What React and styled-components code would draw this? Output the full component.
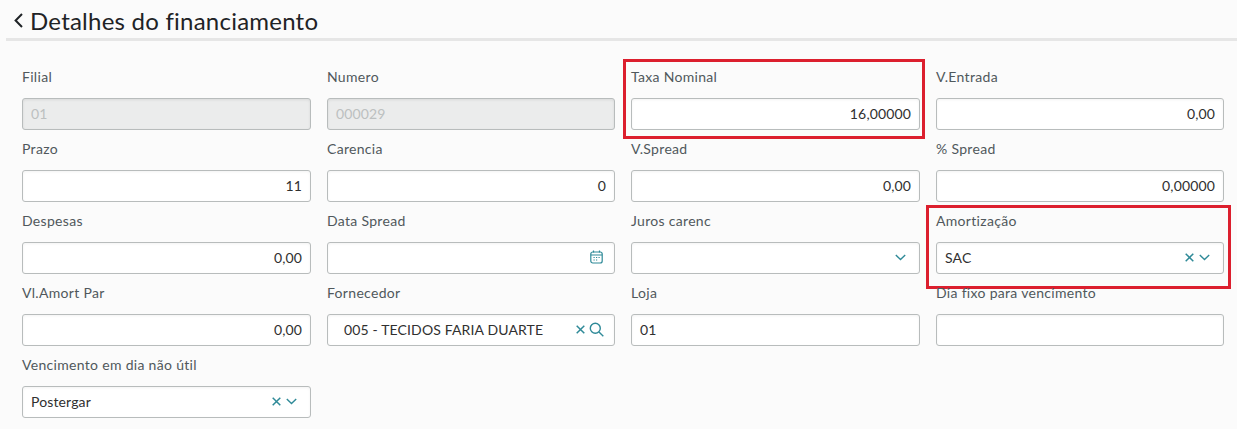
import styled, { createGlobalStyle } from "styled-components"

const GlobalStyle = createGlobalStyle`
html, body {
  margin: 0;
  padding: 0;
  background: #fbfbfb;
  font-family: "Lato", "Open Sans", sans-serif;
}
`;

const Page = styled.div`
  width: 1237px;
  height: 429px;
  overflow: hidden;
`;

const Header = styled.div`
  display: flex;
  align-items: center;
  gap: 7px;
  height: 38px;
  margin-left: 6px;
  padding-left: 8px;
  border-bottom: 3px solid #e6e6e6;
  box-sizing: content-box;
`;

const Title = styled.h1`
  margin: 3px 0 0;
  font-family: "Lato", sans-serif;
  font-size: 24px;
  font-weight: 400;
  letter-spacing: 0.23px;
  color: #1f2326;
`;

const Form = styled.div`
  display: grid;
  grid-template-columns: 289px 288px 289px 288px;
  column-gap: 16px;
  grid-auto-rows: 72px;
  padding: 26px 0 0 22px;
`;

const Field = styled.div`
  position: relative;
  display: flex;
  flex-direction: column;
  gap: 10px;

  ${(p) => p.$mark && `
    &::after {
      content: "";
      box-sizing: border-box;
      position: absolute;
      top: ${p.$mark.top}px;
      left: ${p.$mark.left}px;
      width: ${p.$mark.width}px;
      height: ${p.$mark.height}px;
      border: 3px solid #dc1f2e;
      pointer-events: none;
    }
  `}
`;

const Label = styled.label`
  height: 21px;
  line-height: 19px;
  font-size: 14px;
  color: #50585c;
  letter-spacing: 0.31px;
  white-space: nowrap;
`;

const Box = styled.div`
  box-sizing: border-box;
  display: flex;
  align-items: center;
  gap: 7px;
  height: 32px;
  padding: 0 8px 2px;
  border: 1px solid #b8bcbc;
  border-radius: 3px;
  background: ${(p) => (p.$disabled ? "#ebecec" : "#ffffff")};
  box-shadow: inset 0 1px 3px ${(p) => (p.$disabled ? "rgba(0,0,0,0.08)" : "rgba(0,0,0,0.05)")};
`;

const Value = styled.span`
  flex: 1;
  padding-left: ${(p) => p.$indent || 0}px;
  font-size: 14px;
  letter-spacing: 0.14px;
  text-align: ${(p) => (p.$right ? "right" : "left")};
  color: ${(p) => (p.$disabled ? "#bcc0c0" : "#303030")};
  white-space: nowrap;
`;

const Icons = styled.span`
  display: flex;
  align-items: center;
  gap: ${(p) => p.$gap ?? 5}px;
  margin-right: ${(p) => p.$end ?? 5}px;
`;

const teal = "#2f8a98"

const ClearIcon = () => (
  <svg width="9" height="9" viewBox="0 0 9 9" fill="none" stroke={teal} strokeWidth="1.5">
    <path d="M0.7 0.7l7.6 7.6M8.3 0.7l-7.6 7.6" />
  </svg>
)

const ChevronIcon = () => (
  <svg width="11" height="7" viewBox="0 0 11 7" fill="none" stroke={teal} strokeWidth="1.4">
    <path d="M0.8 1l4.7 4.6L10.2 1" />
  </svg>
)

const SearchIcon = () => (
  <svg width="15" height="15" viewBox="0 0 15 15" fill="none" stroke={teal} strokeWidth="1.4">
    <circle cx="6.3" cy="6.3" r="5" />
    <path d="M10 10l4.3 4.3" />
  </svg>
)

const CalendarIcon = () => (
  <svg width="13" height="14" viewBox="0 0 13 14" fill="none" stroke={teal} strokeWidth="1.2">
    <rect x="0.8" y="2" width="11.4" height="11" rx="2" />
    <path d="M0.8 5h11.4M3.5 0.5v2M9.5 0.5v2" />
    <path d="M3.5 7.5h1.2M6 7.5h1.2M8.5 7.5h1.2M3.5 10h1.2M6 10h1.2" />
  </svg>
)

const BackIcon = () => (
  <svg width="9" height="15" viewBox="0 0 9 15" fill="none" stroke="#1f2326" strokeWidth="2" style={{ marginTop: 3 }}>
    <path d="M8 1L1.6 7.5 8 14" />
  </svg>
)

const fields = [
  { label: "Filial", value: "01", disabled: true },
  { label: "Numero", value: "000029", disabled: true },
  { label: "Taxa Nominal", value: "16,00000", right: true, mark: { top: -8, left: -8, width: 302, height: 80 } },
  { label: "V.Entrada", value: "0,00", right: true },
  { label: "Prazo", value: "11", right: true },
  { label: "Carencia", value: "0", right: true },
  { label: "V.Spread", value: "0,00", right: true },
  { label: "% Spread", value: "0,00000", right: true },
  { label: "Despesas", value: "0,00", right: true },
  { label: "Data Spread", value: "", kind: "date" },
  { label: "Juros carenc", value: "", kind: "select" },
  { label: "Amortização", value: "SAC", kind: "combo", mark: { top: -6, left: -10, width: 305, height: 84 } },
  { label: "Vl.Amort Par", value: "0,00", right: true },
  { label: "Fornecedor", value: "005 - TECIDOS FARIA DUARTE", kind: "lookup", indent: 8 },
  { label: "Loja", value: "01" },
  { label: "Dia fixo para vencimento", value: "" },
  { label: "Vencimento em dia não útil", value: "Postergar", kind: "combo" },
]

const FieldIcons = ({ kind }) => {
  if (kind === "date") return <Icons $end={3}><CalendarIcon /></Icons>
  if (kind === "select") return <Icons><ChevronIcon /></Icons>
  if (kind === "combo") return <Icons><ClearIcon /><ChevronIcon /></Icons>
  if (kind === "lookup") return <Icons $gap={4} $end={2}><ClearIcon /><SearchIcon /></Icons>
  return null
}

const App = () => {
  return (
    <>
      <GlobalStyle />
      <Page>
        <Header>
          <BackIcon />
          <Title>Detalhes do financiamento</Title>
        </Header>
        <Form>
          {fields.map((f) => (
            <Field key={f.label} $mark={f.mark}>
              <Label>{f.label}</Label>
              <Box $disabled={f.disabled}>
                <Value $right={f.right} $disabled={f.disabled} $indent={f.indent}>{f.value}</Value>
                <FieldIcons kind={f.kind} />
              </Box>
            </Field>
          ))}
        </Form>
      </Page>
    </>
  )
}

export default App
